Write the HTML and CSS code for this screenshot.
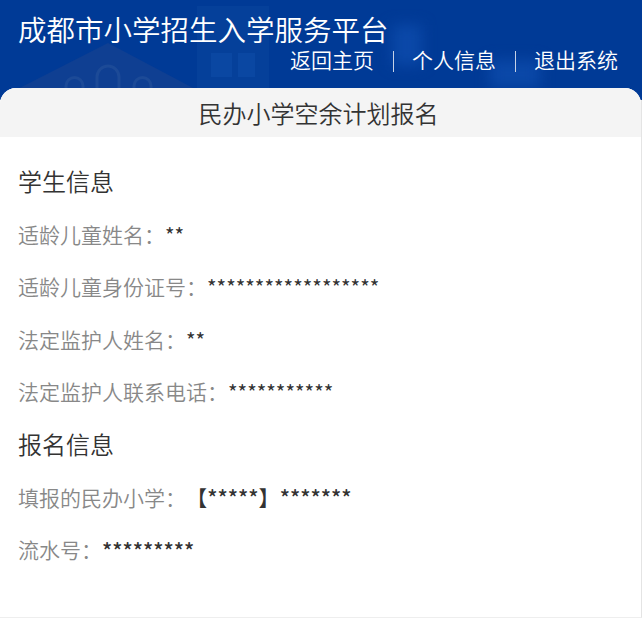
FILE: index.html
```html
<!DOCTYPE html>
<html lang="zh-CN">
<head>
<meta charset="utf-8">
<title>民办小学空余计划报名</title>
<link rel="stylesheet" href="styles.css">
</head>
<body>
<div class="page">
  <header class="header">
    <svg class="header-art" viewBox="0 0 642 100" aria-hidden="true">
      <path class="art-house" d="M0 98 L108 43 L212 98 Z"/>
      <path class="art-window" d="M66 92 V86 A8.500 8.500 0 0 1 83 86 V92 M97 92 V77 A11 11 0 0 1 119 77 V92 M134 92 V86 A8.500 8.500 0 0 1 151 86 V92"/>
      <rect class="art-tower" x="197" y="6" width="72" height="86"/>
      <rect class="art-tower-win" x="211" y="53" width="21" height="24"/>
      <rect class="art-tower-win" x="238" y="53" width="17" height="24"/>
      <rect class="art-glow" x="392" y="25" width="30" height="40"/>
      <rect class="art-glow" x="490" y="60" width="50" height="28"/>
    </svg>
    <h1 class="site-title">成都市小学招生入学服务平台</h1>
    <nav class="nav">
      <a class="nav-link">返回主页</a>
      <span class="nav-sep"></span>
      <a class="nav-link">个人信息</a>
      <span class="nav-sep"></span>
      <a class="nav-link">退出系统</a>
    </nav>
  </header>
  <main class="panel">
    <h2 class="panel-title">民办小学空余计划报名</h2>
    <section class="content">
      <h3 class="section-title">学生信息</h3>
      <p class="row"><span class="label">适龄儿童姓名：</span><span class="value">**</span></p>
      <p class="row"><span class="label">适龄儿童身份证号：</span><span class="value">******************</span></p>
      <p class="row"><span class="label">法定监护人姓名：</span><span class="value">**</span></p>
      <p class="row"><span class="label">法定监护人联系电话：</span><span class="value">***********</span></p>
      <h3 class="section-title">报名信息</h3>
      <p class="row"><span class="label">填报的民办小学：</span><span class="value strong">【*****】*******</span></p>
      <p class="row"><span class="label">流水号：</span><span class="value strong">*********</span></p>
    </section>
  </main>
</div>
</body>
</html>
```
FILE: styles.css
```css
* { box-sizing: border-box; margin: 0; padding: 0; }
html, body { height: 100%; }
body {
  background: #fff;
  font-family: "Noto Sans CJK SC", sans-serif;
  font-weight: 350;
  overflow: hidden;
}
.page {
  display: flex;
  flex-direction: column;
  height: 618px;
  border-right: 1px solid #e4e4e4;
  border-bottom: 1px solid #eee;
}
.header {
  position: relative;
  height: 100px;
  margin-bottom: -12px;
  margin-right: -1px;
  background: #003a96;
  color: #fff;
  padding: 11px 24px 0 18px;
  overflow: hidden;
}
.header-art { position: absolute; left: 0; top: 0; width: 642px; height: 100px; }
.art-house { fill: #0f3f92; }
.art-window { fill: none; stroke: #1c4a97; stroke-width: 3; }
.art-tower { fill: #05409a; }
.art-tower-win { fill: #0a47a2; }
.art-glow { fill: #0a48a8; filter: blur(7px); }
.site-title {
  position: relative;
  font-size: 28.5px;
  font-weight: 350;
  line-height: 36px;
}
.nav {
  position: relative;
  display: flex;
  justify-content: flex-end;
  align-items: center;
  gap: 18.5px;
  margin-top: -2px;
  font-size: 21px;
  line-height: 28px;
}
.nav-sep { width: 1px; height: 21px; margin-top: 5px; background: #c6d2e6; }
.panel {
  position: relative;
  flex: 1;
  background: #fff;
  border-radius: 16px 16px 0 0;
  overflow: hidden;
}
.panel-title {
  height: 49px;
  padding-right: 4px;
  background: #f4f4f4;
  color: #333;
  font-size: 24px;
  font-weight: 350;
  line-height: 50px;
  text-align: center;
}
.content { padding: 17.7px 18px 0; }
.section-title {
  color: #333;
  font-size: 24px;
  font-weight: 350;
  line-height: 52.6px;
}
.row {
  display: flex;
  align-items: center;
  height: 52.6px;
  font-size: 21px;
}
.label { color: #888; }
.value { color: #333; font-size: 20.5px; font-weight: 400; }
.value.strong { font-size: 21.2px; font-weight: 500; }
```
